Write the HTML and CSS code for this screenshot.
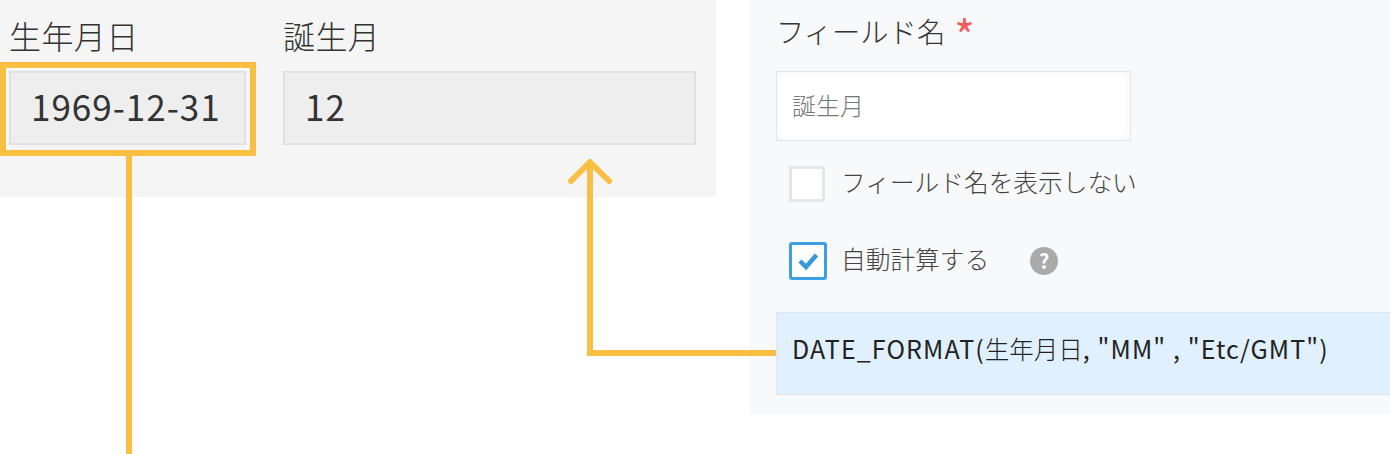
FILE: index.html
```html
<!DOCTYPE html>
<html lang="ja">
<head>
    <meta charset="UTF-8">
    <title>誕生月の自動計算</title>
    <link rel="stylesheet" href="styles.css">
</head>
<body>
<div class="page">
    <div class="record-panel">
        <div class="record-field field-date">
            <div class="field-label">生年月日</div>
            <div class="field-value">1969-12-31</div>
        </div>
        <div class="record-field field-month">
            <div class="field-label">誕生月</div>
            <div class="field-value">12</div>
        </div>
    </div>

    <div class="settings-panel">
        <div class="settings-label">フィールド名<span class="required">*</span></div>
        <div class="name-input">誕生月</div>
        <div class="check-row row-hide">
            <span class="checkbox"></span>
            <span class="check-text">フィールド名を表示しない</span>
        </div>
        <div class="check-row row-auto">
            <span class="checkbox checked">
                <svg viewBox="0 0 38 38" width="38" height="38"><path d="M11 19l6 6 10.5-12" fill="none" stroke="#3498db" stroke-width="4.5"/></svg>
            </span>
            <span class="check-text">自動計算する</span>
            <span class="help-icon">?</span>
        </div>
        <div class="formula">DATE_FORMAT(<span class="cjk">生年月日</span>, "MM" , "Etc/GMT")</div>
    </div>

    <div class="highlight"></div>
    <svg class="arrows" viewBox="0 0 1390 454" width="1390" height="454">
        <path d="M129 156V454" fill="none" stroke="#f8bf42" stroke-width="6"/>
        <path d="M776 353H590V164" fill="none" stroke="#f8bf42" stroke-width="6"/>
        <path d="M571 181L590 162L609 181" fill="none" stroke="#f8bf42" stroke-width="6" stroke-linecap="round" stroke-linejoin="round"/>
    </svg>
</div>
</body>
</html>
```

FILE: styles.css
```css
body {
    margin: 0;
    background-color: #fff;
    font-family: "Noto Sans CJK JP", "Noto Sans", sans-serif;
    color: #333;
}

.page {
    position: relative;
    display: flex;
    align-items: flex-start;
    gap: 34px;
    height: 454px;
    overflow: hidden;
}

/* left side: the record as displayed */
.record-panel {
    display: flex;
    gap: 37px;
    box-sizing: border-box;
    width: 716px;
    height: 197px;
    padding: 12px 20px 0 9px;
    background-color: #f5f5f5;
}

.field-date {
    width: 237px;
}

.field-month {
    flex: 1;
}

.field-label {
    height: 59px;
    font-size: 32px;
    letter-spacing: 0.4px;
    font-weight: 300;
    line-height: 46px;
    color: #333;
}

.field-value {
    box-sizing: border-box;
    height: 74px;
    padding-left: 20px;
    border: 2px solid #e0e0e0;
    background-color: #eee;
    font-size: 35px;
    letter-spacing: 1px;
    line-height: 66px;
}

/* right side: the field settings */
.settings-panel {
    display: flex;
    flex-direction: column;
    align-items: flex-start;
    box-sizing: border-box;
    width: 640px;
    height: 414px;
    padding: 9px 0 0 26px;
    background-color: #f8f9fb;
}

.settings-label {
    height: 62px;
    font-size: 28.3px;
    font-weight: 300;
    line-height: 44px;
    color: #333;
}

.required {
    margin-left: 9px;
    color: #f45c5c;
    font-size: 44px;
    font-weight: 400;
    line-height: 44px;
    vertical-align: -10px;
}

.name-input {
    box-sizing: border-box;
    width: 355px;
    height: 70px;
    padding-left: 15px;
    border: 1px solid #e3e5e8;
    background-color: #fff;
    box-shadow: inset 0 0 8px rgba(0, 0, 0, 0.05);
    font-size: 24px;
    font-weight: 300;
    line-height: 66px;
    color: #777;
}

.check-row {
    display: flex;
    align-items: center;
    margin-left: 13px;
    font-size: 24.7px;
    font-weight: 300;
    line-height: 36px;
    color: #444;
}

.row-hide {
    margin-top: 25px;
}

.row-auto {
    margin-top: 40px;
}

.check-text {
    position: relative;
    top: -3px;
}

.checkbox {
    box-sizing: border-box;
    width: 36px;
    height: 36px;
    margin-right: 16px;
    border: 3px solid #e6e6e6;
    background-color: #fff;
}

.checkbox svg {
    display: block;
    margin: -3px;
}

.checked {
    width: 38px;
    height: 38px;
    margin-right: 14px;
    border-color: #3d9fe3;
    border-radius: 3px;
}

.help-icon {
    width: 28px;
    height: 28px;
    margin-left: 41px;
    border-radius: 50%;
    background-color: #aaa;
    color: #fff;
    font-size: 20px;
    font-weight: 700;
    line-height: 28px;
    text-align: center;
}

.formula {
    box-sizing: border-box;
    width: 614px;
    height: 83px;
    margin-top: 32px;
    padding: 12px 0 0 15px;
    border: 1px solid #e3e5e8;
    border-right: none;
    background-color: #e0f0fe;
    font-size: 25px;
    letter-spacing: 1.1px;
    line-height: 46px;
    color: #222;
}

.cjk {
    font-size: 24.5px;
    font-weight: 300;
    letter-spacing: 0;
}

/* call-outs drawn over the screenshot */
.highlight {
    position: absolute;
    left: 0;
    top: 62px;
    width: 244px;
    height: 82px;
    border: 6px solid #f8bf42;
    box-shadow: inset 2px 2px 0 #fff;
}

.arrows {
    position: absolute;
    left: 0;
    top: 0;
    pointer-events: none;
}
```
